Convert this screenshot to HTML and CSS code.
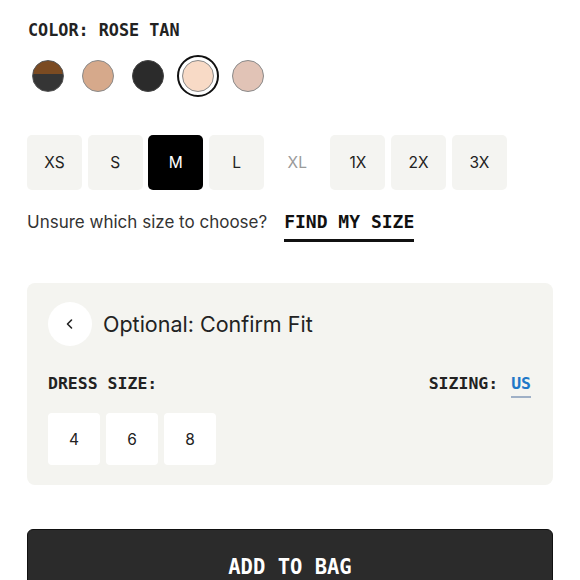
FILE: index.html
```html
<!DOCTYPE html>
<html lang="en">
<head>
<meta charset="utf-8">
<title>Product options</title>
<link rel="stylesheet" href="styles.css">
</head>
<body>
<main class="page">
  <div class="color-label">COLOR: ROSE TAN</div>
  <div class="swatches">
    <span class="swatch"><span class="dot dot-split"></span></span>
    <span class="swatch"><span class="dot dot-tan"></span></span>
    <span class="swatch"><span class="dot dot-black"></span></span>
    <span class="swatch selected"><span class="dot dot-rose"></span></span>
    <span class="swatch"><span class="dot dot-blush"></span></span>
  </div>
  <div class="sizes">
    <button class="size">XS</button>
    <button class="size">S</button>
    <button class="size active">M</button>
    <button class="size">L</button>
    <button class="size disabled">XL</button>
    <button class="size">1X</button>
    <button class="size">2X</button>
    <button class="size">3X</button>
  </div>
  <div class="find-row">
    <span class="unsure">Unsure which size to choose?</span>
    <a class="find-link">FIND MY SIZE</a>
  </div>
  <section class="panel">
    <div class="panel-head">
      <span class="back">
        <svg width="14" height="14" viewBox="0 0 14 14"><path d="M8.5 3 L4.5 7 L8.5 11" fill="none" stroke="#222" stroke-width="1.6" stroke-linecap="round" stroke-linejoin="round"/></svg>
      </span>
      <span class="panel-title">Optional: Confirm Fit</span>
    </div>
    <div class="panel-labels">
      <span class="mono-label">DRESS SIZE:</span>
      <span class="mono-label">SIZING: <span class="us">US</span></span>
    </div>
    <div class="dress-sizes">
      <button class="dsize">4</button>
      <button class="dsize">6</button>
      <button class="dsize">8</button>
    </div>
  </section>
  <button class="bag">ADD TO BAG</button>
</main>
</body>
</html>
```
FILE: styles.css
```css
* { box-sizing: border-box; }
html, body { margin: 0; padding: 0; background: #fff; }
body { font-family: Inter, "Liberation Sans", sans-serif; color: #222; }
.page { padding: 20px 27px 0 27px; height: 580px; overflow: hidden; }

.color-label {
  font-family: "DejaVu Sans Mono", monospace;
  font-weight: 700; font-size: 16.8px; line-height: 20px;
  color: #222; padding-left: 1px;
}
.swatches { display: flex; gap: 8px; margin-top: 15px; }
.swatch {
  width: 42px; height: 42px; border-radius: 50%;
  display: flex; align-items: center; justify-content: center;
  border: 2px solid transparent;
}
.swatch.selected { border-color: #111; }
.dot { width: 32px; height: 32px; border-radius: 50%; border: 1px solid #8a8a8a; display: block; }
.dot-split { background: linear-gradient(#7b4b22 0 44%, #353535 44% 100%); border-color: #555; }
.dot-tan { background: #d6a98b; }
.dot-black { background: #2b2b2b; border-color: #444; }
.dot-rose { background: #f8dac6; }
.dot-blush { background: #e1c3b6; }

.sizes { display: flex; gap: 5.7px; margin-top: 38px; }
.size {
  width: 55px; height: 55px; border: none; border-radius: 5px;
  background: #f4f4f1; color: #222;
  font-family: Inter, "Liberation Sans", sans-serif; font-size: 15.5px;
  padding: 0; margin: 0;
}
.size.active { background: #000; color: #fff; }
.size.disabled { background: transparent; color: #9a9a9a; }

.find-row { display: flex; align-items: baseline; margin-top: 21px; }
.unsure { font-size: 17px; color: #333; }
.find-link {
  margin-left: 17px;
  font-family: "DejaVu Sans Mono", monospace; font-weight: 700;
  font-size: 18px; line-height: 22px; color: #111;
  padding-bottom: 6px; border-bottom: 3px solid #111;
}

.panel {
  margin-top: 41px; background: #f4f4f0; border-radius: 8px;
  padding: 19px 22px 21px 21px; height: 202px;
}
.panel-head { display: flex; align-items: center; gap: 11px; }
.back {
  width: 44px; height: 44px; border-radius: 50%; background: #fff;
  display: flex; align-items: center; justify-content: center;
}
.panel-title { font-size: 21.5px; color: #222; }
.panel-labels {
  display: flex; justify-content: space-between; align-items: baseline;
  margin-top: 28px;
}
.mono-label {
  font-family: "DejaVu Sans Mono", monospace; font-weight: 700;
  font-size: 16.5px; line-height: 20px; color: #222;
}
.us { color: #1f78c8; border-bottom: 2px solid #9fb0c6; padding-bottom: 3px; margin-left: 3px; }
.dress-sizes { display: flex; gap: 6px; margin-top: 19px; }
.dsize {
  width: 52px; height: 52px; border: none; border-radius: 4px;
  background: #fff; color: #222; padding: 0; margin: 0;
  font-family: Inter, "Liberation Sans", sans-serif; font-size: 15.5px;
}

.bag {
  display: block; width: 100%; margin-top: 44px; height: 76px;
  background: #2b2b2b; border: 1px solid #111; border-radius: 6px;
  color: #fff; font-family: "DejaVu Sans Mono", monospace; font-weight: 700;
  font-size: 20.5px;
  padding: 0 0 1px 0;
}
```
